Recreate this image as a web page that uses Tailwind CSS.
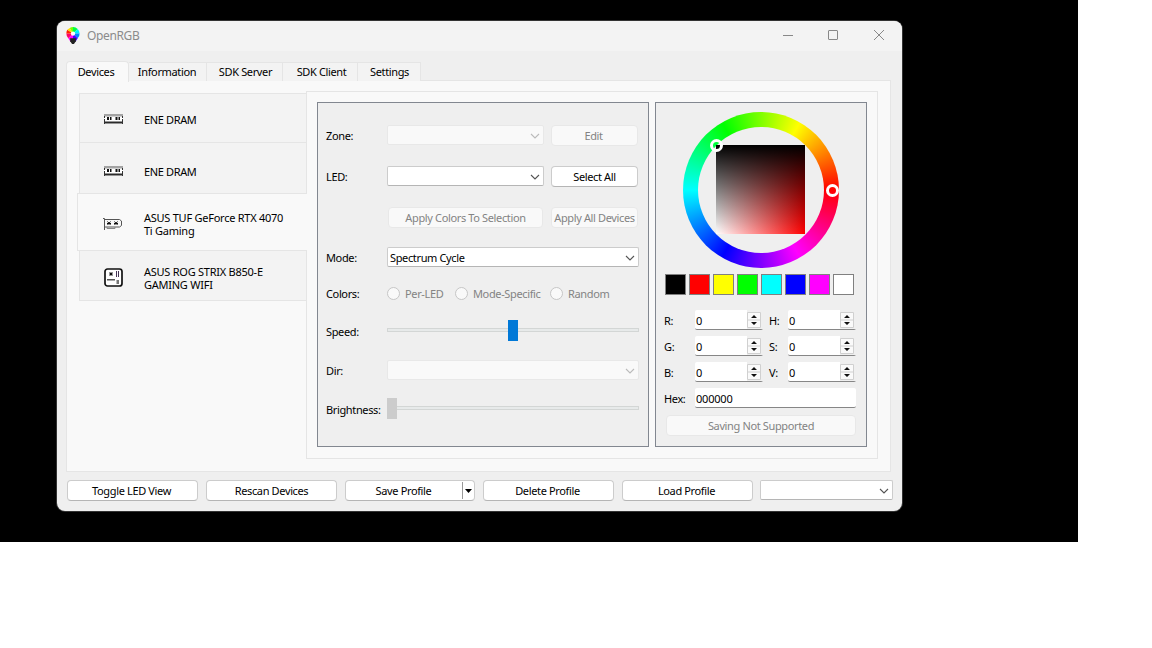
<!DOCTYPE html>
<html lang="en">
<head>
    <meta charset="UTF-8">
    <meta name="viewport" content="width=device-width, initial-scale=1.0">
    <title>OpenRGB</title>
    <script src="https://cdn.jsdelivr.net/npm/@tailwindcss/browser@4"></script>
</head>
<body class="bg-white">
    <svg class="hidden">
        <symbol id="chevron" viewBox="0 0 10 6"><path d="M1 1l4 4 4-4" fill="none" stroke="currentColor" stroke-width="1.1"/></symbol>
        <symbol id="dram" viewBox="0 0 19 10">
            <path d="M0 0h19v10H0z" fill="#fff"/>
            <path d="M0 0h19v2.500H0z" fill="#a3a3a3"/>
            <path d="M0 2h1v2H0zM18 2h1v2h-1zM0 5h1v5H0zM18 5h1v5h-1z" fill="#333"/>
            <path d="M3 3h2v3H3zM6 3h1.500v3H6zM11.500 3h2v3h-2zM14.500 3h1.500v3h-1.500z" fill="#111"/>
            <path d="M1 7.500h17v2H1z" fill="#2a2a2a"/>
        </symbol>
    </svg>

    <div class="w-[1078px] h-[542px] bg-black pl-[57px] pt-[21px] overflow-hidden">
        <div class="w-[845px] h-[490px] rounded-lg bg-[#efefef] ring-1 ring-[#333] overflow-hidden font-['Noto_Sans',sans-serif] text-[11px] leading-[13px] tracking-[-0.36px] text-black flex flex-col">

            <!-- Title bar -->
            <div class="h-[30px] shrink-0 bg-[#f3f3f3] flex items-center pl-[9px] pb-[2px]">
                <svg class="w-[14px] h-[17px]" viewBox="0 0 14 18">
                    <path d="M7 7L3.500 1A7 7 0 0 1 7 0z" fill="#7f0"/><path d="M7 7V0a7 7 0 0 1 5 2z" fill="#0f4"/>
                    <path d="M7 7l5-5a7 7 0 0 1 2 5z" fill="#0ef"/><path d="M7 7h7a7 7 0 0 1-2 5z" fill="#08f"/>
                    <path d="M7 7l5 5-2 3H7z" fill="#40f"/><path d="M7 7v8H4l-2-3z" fill="#f0f"/>
                    <path d="M7 7l-5 5a7 7 0 0 1-2-5z" fill="#f06"/><path d="M7 7H0a7 7 0 0 1 1-4z" fill="#f20"/>
                    <path d="M7 7L1 3l2.500-2z" fill="#fd0"/>
                    <circle cx="7" cy="7" r="2.300" fill="#fff"/><path d="M4 12h6v3l-2 3H6l-2-3z" fill="#222"/>
                </svg>
                <span class="ml-[7px] text-[12px] text-[#8b8b8b]">OpenRGB</span>
                <svg class="ml-auto mr-[16px] w-[103px] h-[12px] shrink-0" viewBox="0 0 103 12" fill="none" stroke="#888">
                    <path d="M0 6.500h10"/><rect x="45.500" y="1.500" width="9" height="9" rx=".5"/><path d="M91 1l10 10M101 1L91 11"/>
                </svg>
            </div>

            <!-- Main tabs -->
            <div class="flex items-end h-[30px] shrink-0 pl-[9px] relative z-10">
                <div class="w-[63px] h-[21px] -mb-px bg-[#f9f9f9] border border-b-0 border-[#e5e5e5] rounded-t-sm flex justify-center pt-[3px] pr-[3px]">Devices</div>
                <div class="w-[78px] h-[19px] bg-[#f3f3f3] border-t border-r border-[#e5e5e5] flex justify-center pt-[2px] pr-px">Information</div>
                <div class="w-[76px] h-[19px] bg-[#f3f3f3] border-t border-r border-[#e5e5e5] flex justify-center pt-[2px] pl-[2px]">SDK Server</div>
                <div class="w-[75px] h-[19px] bg-[#f3f3f3] border-t border-r border-[#e5e5e5] flex justify-center pt-[2px] pl-[3px]">SDK Client</div>
                <div class="w-[63px] h-[19px] bg-[#f3f3f3] border-t border-r border-[#e5e5e5] flex justify-center pt-[2px] pl-px">Settings</div>
            </div>

            <div class="ml-[9px] w-[825px] h-[392px] -mt-px shrink-0 bg-[#f9f9f9] border border-[#e5e5e5] flex">
                <!-- Device list -->
                <div class="w-[240px] shrink-0 pl-[10px] pt-[12px] z-10">
                    <div class="ml-[2px] w-[228px] h-[50px] bg-[#f3f3f3] border border-[#e5e5e5] flex items-center pl-[24px]">
                        <svg class="w-[19px] h-[10px] mt-[2px]"><use href="#dram"/></svg><span class="ml-[21px] mt-[3px]">ENE DRAM</span>
                    </div>
                    <div class="ml-[2px] w-[228px] h-[51px] bg-[#f3f3f3] border border-t-0 border-[#e5e5e5] flex items-center pl-[24px]">
                        <svg class="w-[19px] h-[10px] mt-[6px]"><use href="#dram"/></svg><span class="ml-[21px] mt-[7px]">ENE DRAM</span>
                    </div>
                    <div class="w-[230px] h-[58px] bg-[#f9f9f9] border border-r-0 border-[#e5e5e5] -mt-px flex items-center pl-[25px]">
                        <svg class="w-[19px] h-[12px] mt-[4px]" viewBox="0 0 19 12" fill="none" stroke="#555">
                            <path d="M0 .5h1.500V12M1.500 1.500h15l2 1.500v4.500l-2 1.500h-15"/><path d="M4 9v1.500h8V9" stroke="#888"/>
                            <path d="M4.500 3.500l3 3.500M7.500 3.500l-3 3.500M4 5.500h4M11.500 3.500l3 3.500M14.500 3.500l-3 3.500M11 5.500h4" stroke="#111"/>
                        </svg>
                        <span class="ml-[22px] mt-[4px] tracking-[-0.25px]">ASUS TUF GeForce RTX 4070<br>Ti Gaming</span>
                    </div>
                    <div class="ml-[2px] w-[228px] h-[51px] bg-[#f3f3f3] border border-[#e5e5e5] -mt-px flex items-center pl-[24px]">
                        <svg class="w-[19px] h-[19px] mt-[4px]" viewBox="0 0 19 19">
                            <rect x="1" y="1" width="17" height="17" rx="2.500" fill="#fff" stroke="#111" stroke-width="1.700"/>
                            <path d="M5 4h4v4H5z" fill="#999"/><path d="M6 5h2v2H6z" fill="#111"/>
                            <path d="M12 3h1v6h-1zM14 3h1v6h-1z" fill="#435"/><path d="M3 11h8v1.500H3z" fill="#555"/><path d="M12.500 12h2.500v4h-2.500z" fill="#777"/>
                        </svg>
                        <span class="ml-[21px] mt-[4px] tracking-[-0.25px]">ASUS ROG STRIX B850-E<br>GAMING WIFI</span>
                    </div>
                </div>

                <div class="-ml-px mt-[10px] w-[572px] h-[368px] bg-[#f9f9f9] border border-[#e5e5e5] flex gap-[6px] pl-[10px] pt-[10px]">
                    <!-- Mode controls -->
                    <div class="w-[332px] h-[345px] bg-[#efefef] border border-[#828790] px-[8px] pt-[21px]">
                        <div class="flex items-center h-[22px]">
                            <span class="w-[61px]">Zone:</span>
                            <div class="w-[157px] h-[20px] bg-[#f9f9f9] border border-[#e8e8e8] rounded-xs flex items-center justify-end pr-[3px] pt-px text-[#bbb]"><svg class="w-[10px] h-[6px]"><use href="#chevron"/></svg></div>
                            <div class="ml-[7px] w-[87px] h-[21px] bg-[#f9f9f9] border border-[#e8e8e8] rounded flex items-center justify-center pr-[2px] text-[#838383]">Edit</div>
                        </div>
                        <div class="flex items-center h-[22px] mt-[19px]">
                            <span class="w-[61px]">LED:</span>
                            <div class="w-[157px] h-[20px] bg-white border border-[#ccc] border-b-[#b5b5b5] rounded-xs flex items-center justify-end pr-[3px] pt-px text-[#555]"><svg class="w-[10px] h-[6px]"><use href="#chevron"/></svg></div>
                            <div class="ml-[7px] w-[87px] h-[21px] bg-white border border-[#ccc] border-b-[#b5b5b5] rounded flex items-center justify-center">Select All</div>
                        </div>
                        <div class="flex items-center h-[22px] mt-[19px] pl-[62px] text-[#838383] whitespace-nowrap">
                            <div class="w-[155px] h-[21px] bg-[#f9f9f9] border border-[#e8e8e8] rounded flex items-center justify-center">Apply Colors To Selection</div>
                            <div class="ml-[8px] w-[87px] h-[21px] bg-[#f9f9f9] border border-[#e8e8e8] rounded flex items-center justify-center">Apply All Devices</div>
                        </div>
                        <div class="flex items-center h-[22px] mt-[18px]">
                            <span class="w-[61px]">Mode:</span>
                            <div class="w-[252px] h-[20px] bg-white border border-[#ccc] border-b-[#b5b5b5] rounded-xs flex items-center justify-between pl-[2px] pr-[3px]"><span>Spectrum Cycle</span><svg class="w-[10px] h-[6px] mt-px text-[#555]"><use href="#chevron"/></svg></div>
                        </div>
                        <div class="flex items-center h-[22px] mt-[14px] text-[#838383] whitespace-nowrap">
                            <span class="w-[61px] text-black">Colors:</span>
                            <i class="size-[13px] rounded-full border border-[#c6c6c6] bg-[#f9f9f9]"></i><span class="w-[50px] ml-[5px]">Per-LED</span>
                            <i class="size-[13px] rounded-full border border-[#c6c6c6] bg-[#f9f9f9]"></i><span class="w-[77px] ml-[5px]">Mode-Specific</span>
                            <i class="size-[13px] rounded-full border border-[#c6c6c6] bg-[#f9f9f9]"></i><span class="ml-[5px]">Random</span>
                        </div>
                        <div class="flex items-center h-[22px] mt-[15px]">
                            <span class="w-[61px] mt-[3px]">Speed:</span>
                            <div class="w-[252px] h-[4px] border border-[#d3d6d5] bg-[#e7eaea] flex items-center justify-center"><i class="w-[10px] h-[21px] bg-[#0078d7] shrink-0"></i></div>
                        </div>
                        <div class="flex items-center h-[22px] mt-[18px]">
                            <span class="w-[61px]">Dir:</span>
                            <div class="w-[252px] h-[20px] bg-[#f9f9f9] border border-[#e8e8e8] rounded-xs flex items-center justify-end pr-[3px] pt-px text-[#bbb]"><svg class="w-[10px] h-[6px]"><use href="#chevron"/></svg></div>
                        </div>
                        <div class="flex items-center h-[22px] mt-[16px]">
                            <span class="w-[61px] mt-[3px]">Brightness:</span>
                            <div class="w-[252px] h-[4px] border border-[#d3d6d5] bg-[#e7eaea] flex items-center"><i class="-ml-px w-[10px] h-[21px] bg-[#ccc] shrink-0"></i></div>
                        </div>
                    </div>

                    <!-- Color picker -->
                    <div class="w-[212px] h-[345px] bg-[#efefef] border border-[#828790] pl-[8px] pt-[9px]">
                        <div class="relative ml-[19px] size-[156px] rounded-full bg-[conic-gradient(from_90deg,#f00,#f0f,#00f,#0ff,#0f0,#ff0,#f00)] flex items-center justify-center">
                            <div class="size-[126px] rounded-full bg-[#efefef] pl-[18px] pt-[18px]">
                                <div class="size-[89px] bg-[linear-gradient(to_bottom,#000,transparent),linear-gradient(to_right,#fff,#f00)]"></div>
                            </div>
                            <i class="absolute left-[27px] top-[27px] size-[13px] rounded-full border-3 border-white"></i>
                            <i class="absolute left-[142.5px] top-[71.5px] size-[13px] rounded-full border-3 border-white"></i>
                        </div>
                        <div class="flex gap-[3px] mt-[6px] ml-px">
                            <i class="size-[21px] border border-[#808080] bg-black"></i>
                            <i class="size-[21px] border border-[#808080] bg-[#f00]"></i>
                            <i class="size-[21px] border border-[#808080] bg-[#ff0]"></i>
                            <i class="size-[21px] border border-[#808080] bg-[#0f0]"></i>
                            <i class="size-[21px] border border-[#808080] bg-[#0ff]"></i>
                            <i class="size-[21px] border border-[#808080] bg-[#00f]"></i>
                            <i class="size-[21px] border border-[#808080] bg-[#f0f]"></i>
                            <i class="size-[21px] border border-[#808080] bg-white"></i>
                        </div>
                        <div id="channels" class="grid grid-cols-[31px_74px_19px_69px] gap-y-[6px] mt-[15px] items-center"></div>
                        <div class="flex items-center mt-[6px]">
                            <span class="w-[31px]">Hex:</span>
                            <div class="w-[161px] h-[20px] bg-white border-b border-[#868686] rounded-xs pl-[1px] pt-[4px] tracking-[-0.2px]">000000</div>
                        </div>
                        <div class="ml-[2px] mt-[7px] w-[190px] h-[21px] bg-[#f9f9f9] border border-[#e8e8e8] rounded flex items-center justify-center text-[#838383]">Saving Not Supported</div>
                    </div>
                </div>
            </div>

            <!-- Bottom buttons -->
            <div class="flex mt-[8px] pl-[10px] whitespace-nowrap">
                <div class="w-[131px] h-[21px] bg-white border border-[#ccc] border-b-[#b5b5b5] rounded flex items-center justify-center pr-[2px]">Toggle LED View</div>
                <div class="ml-[8px] w-[131px] h-[21px] bg-white border border-[#ccc] border-b-[#b5b5b5] rounded flex items-center justify-center">Rescan Devices</div>
                <div class="ml-[8px] w-[130px] h-[21px] bg-white border border-[#ccc] border-b-[#b5b5b5] rounded flex items-center">
                    <span class="flex-1 text-center pr-px">Save Profile</span>
                    <i class="w-px h-[17px] bg-[#999]"></i>
                    <svg class="w-[7px] h-[4px] ml-[2px] mr-[2px]" viewBox="0 0 7 4"><path d="M0 0h7L3.500 4z"/></svg>
                </div>
                <div class="ml-[8px] w-[131px] h-[21px] bg-white border border-[#ccc] border-b-[#b5b5b5] rounded flex items-center justify-center pr-[2px]">Delete Profile</div>
                <div class="ml-[8px] w-[131px] h-[21px] bg-white border border-[#ccc] border-b-[#b5b5b5] rounded flex items-center justify-center pr-[2px]">Load Profile</div>
                <div class="ml-[7px] w-[133px] h-[20px] bg-white border border-[#ccc] border-b-[#b5b5b5] rounded-xs flex items-center justify-end pr-[3px] pt-px text-[#555]"><svg class="w-[10px] h-[6px]"><use href="#chevron"/></svg></div>
            </div>
        </div>
    </div>

    <script>
        // Spin boxes for each color channel
        document.getElementById("channels").innerHTML = ["R", "H", "G", "S", "B", "V"].map(name => `
            <span class="pt-px">${name}:</span>
            <div class="w-[68px] h-[20px] bg-white border-b border-[#868686] rounded-xs flex items-center justify-between pl-[1px]">
                <span class="pt-[2px]">0</span>
                <div class="w-[16px] h-[19px] bg-[#efefef] flex items-center">
                    <svg class="w-[14px] h-[16px]" viewBox="0 0 14 16">
                        <path d="M.5.500h13v15H.5zM.5 8h13" fill="#fafafa" stroke="#d0d0d0"/>
                        <path d="M4 6h6L7 3zM4 10h6l-3 3z" fill="#111"/>
                    </svg>
                </div>
            </div>`).join("");
    </script>
</body>
</html>
